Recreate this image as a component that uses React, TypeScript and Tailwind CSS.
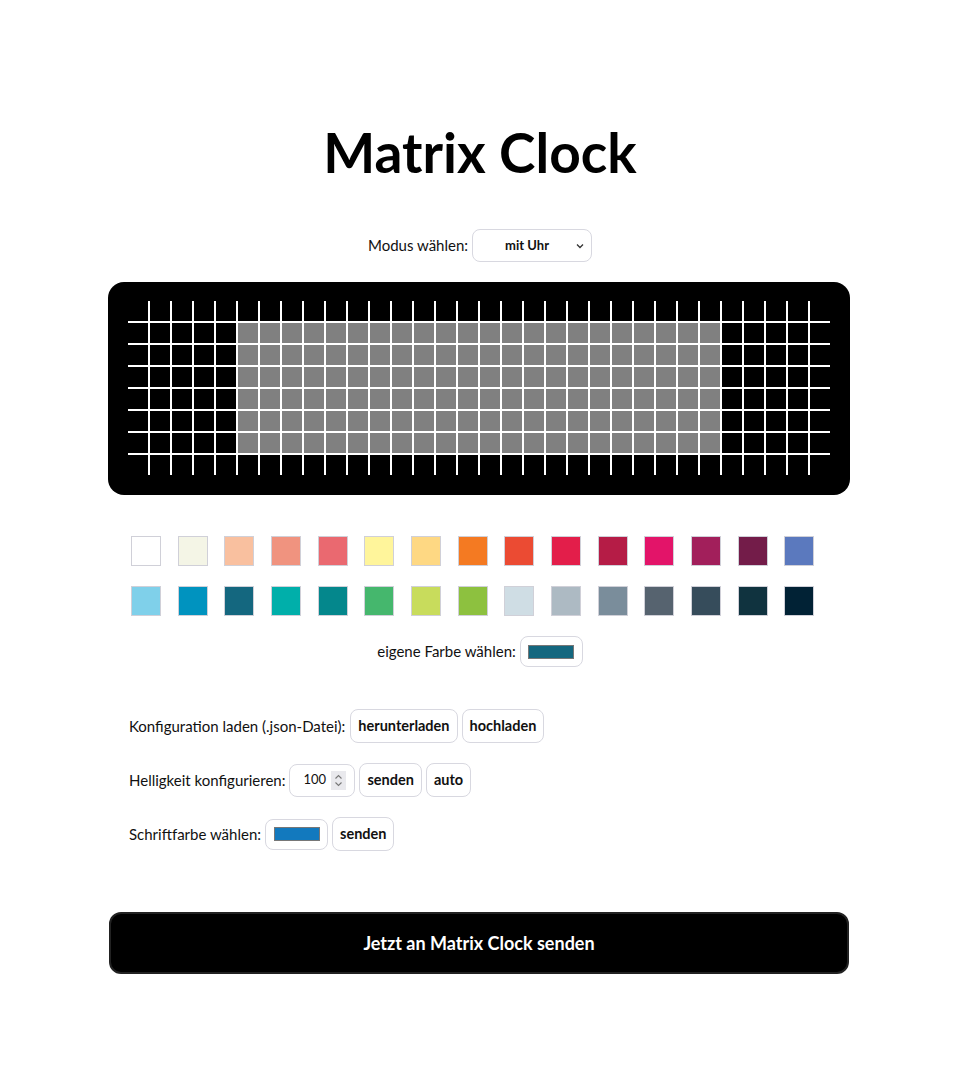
import React, { useState } from 'react';

const ROW_ONE = [
  '#ffffff', '#f4f5e6', '#f9c09f', '#f0937f', '#ea6970', '#fff59b', '#fed883', '#f47a22',
  '#eb4b33', '#e31e4a', '#b51c46', '#e31469', '#a21f5b', '#731c49', '#5b79be',
];

const ROW_TWO = [
  '#7fd0ea', '#0093bf', '#14677f', '#00afaa', '#04878c', '#45b76d', '#c8dc5c', '#8dc13f',
  '#cfdde4', '#adbac3', '#7a8d9b', '#56636f', '#364c5b', '#10333f', '#012235',
];

const ROWS = 8;
const COLS = 32;

const Btn: React.FC<{ children: React.ReactNode }> = ({ children }) => (
  <button className="h-[34px] px-[7px] rounded-lg border border-[#d8d8e0] bg-white text-[14.5px] font-bold text-[#111]">
    {children}
  </button>
);

const ColorPick: React.FC<{ color: string }> = ({ color }) => (
  <button className="h-[31px] w-[63px] flex items-center justify-center rounded-lg border border-[#d8d8e0] bg-white">
    <span className="block w-[46px] h-[14px] border border-[#777]" style={{ backgroundColor: color }} />
  </button>
);

const App: React.FC = () => {
  const [mode, setMode] = useState('uhr');
  const [brightness, setBrightness] = useState('100');

  const cells = [];
  for (let r = 0; r < ROWS; r++) {
    for (let c = 0; c < COLS; c++) {
      const lit = r >= 1 && r <= 6 && c >= 5 && c <= 26;
      cells.push(<div key={`${r}-${c}`} className={lit ? 'bg-[#808080]' : 'bg-black'} />);
    }
  }

  return (
    <div className="min-h-screen bg-white font-[Lato,sans-serif] text-[#111]">
      <main className="w-[744px] mx-auto pt-[125px] pb-[116px]">
        <h1 className="text-[55px] leading-none font-bold text-black text-center">Matrix Clock</h1>

        <div className="mt-[49px] flex items-center justify-center gap-1 text-[15px]">
          <label htmlFor="mode">Modus wählen:</label>
          <div className="relative">
            <select
              id="mode"
              value={mode}
              onChange={(e) => setMode(e.target.value)}
              className="appearance-none h-[33px] w-[120px] pr-[10px] rounded-lg border border-[#d8d8e0] bg-white text-[13px] font-bold text-center [text-align-last:center]"
            >
              <option value="uhr">mit Uhr</option>
              <option value="text">Text</option>
            </select>
            <svg className="absolute right-[8px] top-[14px] pointer-events-none" width="8" height="6" viewBox="0 0 8 6" fill="none">
              <path d="M1 1.5l3 3 3-3" stroke="#333" strokeWidth="1.3" />
            </svg>
          </div>
        </div>

        {/* LED matrix */}
        <div className="mt-5 w-[742px] rounded-2xl bg-black px-5 pt-[19px] pb-[20px]">
          <div className="grid grid-cols-[repeat(32,20px)] grid-rows-[repeat(8,20px)] gap-[2px] bg-white w-fit">
            {cells}
          </div>
        </div>

        {/* palette */}
        <div className="mt-[41px] ml-[23px] w-[700px] grid grid-cols-[repeat(15,1fr)] gap-y-5">
          {[...ROW_ONE, ...ROW_TWO].map((c, i) => (
            <button key={i} className="w-[30px] h-[30px] border border-[#d0d0d8]" style={{ backgroundColor: c }} />
          ))}
        </div>

        <div className="mt-5 flex items-center justify-center gap-1 text-[15px]">
          <span>eigene Farbe wählen:</span>
          <ColorPick color="#14677f" />
        </div>

        {/* settings */}
        <div className="mt-[42px] pl-[21px] flex flex-col gap-5 text-[15px]">
          <div className="flex items-center gap-1">
            <span className="mr-[1px]">Konfiguration laden (.json-Datei):</span>
            <Btn>herunterladen</Btn>
            <Btn>hochladen</Btn>
          </div>
          <div className="flex items-center gap-1">
            <span>Helligkeit konfigurieren:</span>
            <div className="h-[33px] w-[66px] flex items-center rounded-lg border border-[#d8d8e0] bg-white pl-[13px] pr-[8px]">
              <input
                type="text"
                value={brightness}
                onChange={(e) => setBrightness(e.target.value)}
                className="w-[26px] text-[13px] outline-none bg-transparent"
              />
              <svg className="ml-auto" width="15" height="19" viewBox="0 0 15 19">
                <rect width="15" height="19" fill="#e9e9ed" />
                <path d="M4.5 7.5l3-3 3 3M4.5 11.5l3 3 3-3" stroke="#777" strokeWidth="1.1" fill="none" />
              </svg>
            </div>
            <Btn>senden</Btn>
            <Btn>auto</Btn>
          </div>
          <div className="flex items-center gap-1">
            <span>Schriftfarbe wählen:</span>
            <ColorPick color="#1279be" />
            <Btn>senden</Btn>
          </div>
        </div>

        <button className="mt-[61px] ml-[1px] w-[740px] h-[62px] rounded-xl bg-black border-2 border-[#222] text-white text-[18px] font-bold">
          Jetzt an Matrix Clock senden
        </button>
      </main>
    </div>
  );
};

export default App;
